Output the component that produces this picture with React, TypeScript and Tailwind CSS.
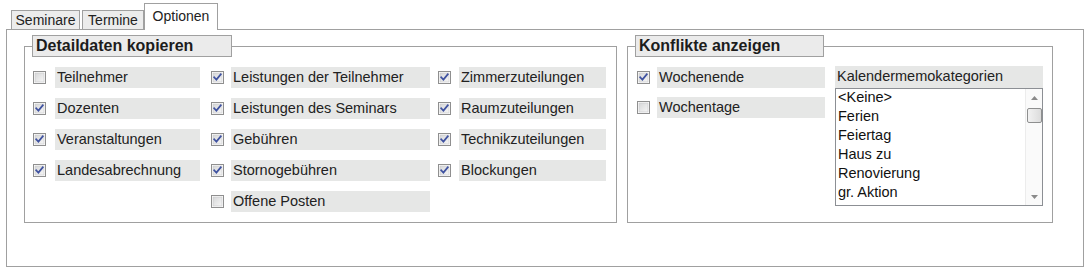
import React from "react";

const FONT = { fontFamily: '"Liberation Sans", Arial, sans-serif' };

function Check({ checked }: { checked: boolean }) {
  return (
    <svg width="13" height="13" viewBox="0 0 13 13" className="shrink-0">
      <defs>
        <linearGradient id="cbg" x1="0" y1="0" x2="1" y2="1">
          <stop offset="0" stopColor="#d6d7d8" />
          <stop offset="1" stopColor="#f6f6f6" />
        </linearGradient>
      </defs>
      <rect x="0.5" y="0.5" width="12" height="12" fill="#ffffff" stroke="#8f8f8f" />
      <rect x="2" y="2" width="9" height="9" fill="url(#cbg)" stroke="#c6c7c8" strokeWidth="0.6" />
      {checked && (
        <path d="M3.2 6.3 L5.4 8.6 L9.8 3.3" fill="none" stroke="#3f52a0" strokeWidth="1.7" strokeLinecap="square" />
      )}
    </svg>
  );
}

function Item({ label, checked, w, gap }: { label: string; checked: boolean; w: number; gap: string }) {
  return (
    <div className={`flex h-[21px] items-center ${gap}`}>
      <Check checked={checked} />
      <div
        className="flex h-[21px] items-center bg-[#e6e7e6] pl-[2px] pt-[1px] text-[14.5px] text-[#222] whitespace-nowrap"
        style={{ width: w }}
      >
        {label}
      </div>
    </div>
  );
}

function Legend({ title, w }: { title: string; w: number }) {
  return (
    <div
      className="absolute top-0 left-[8px] flex h-[22px] items-center border border-[#a0a0a0] bg-[#ebebeb] pl-[3px] text-[16px] font-bold text-[#1c1c1c]"
      style={{ width: w }}
    >
      {title}
    </div>
  );
}

export default function App() {
  const col1: [string, boolean][] = [
    ["Teilnehmer", false],
    ["Dozenten", true],
    ["Veranstaltungen", true],
    ["Landesabrechnung", true],
  ];
  const col2: [string, boolean][] = [
    ["Leistungen der Teilnehmer", true],
    ["Leistungen des Seminars", true],
    ["Gebühren", true],
    ["Stornogebühren", true],
    ["Offene Posten", false],
  ];
  const col3: [string, boolean][] = [
    ["Zimmerzuteilungen", true],
    ["Raumzuteilungen", true],
    ["Technikzuteilungen", true],
    ["Blockungen", true],
  ];
  const memo = ["<Keine>", "Ferien", "Feiertag", "Haus zu", "Renovierung", "gr. Aktion", "Urlaub"];

  return (
    <div className="h-[273px] w-[1090px] bg-white text-[#222]" style={FONT}>
      {/* tabs */}
      <div className="flex h-[29px] items-end pl-[11px] text-[14px]">
        <div className="flex h-[19px] w-[69px] items-center justify-center border border-b-0 border-[#a0a0a0] bg-[#ececec]">
          Seminare
        </div>
        <div className="ml-[2px] flex h-[19px] w-[62px] items-center justify-center border border-b-0 border-[#a0a0a0] bg-[#ececec]">
          Termine
        </div>
        <div className="relative z-10 -mb-px flex h-[27px] w-[74px] items-center justify-center border border-b-0 border-[#a0a0a0] bg-white pb-[2px]">
          Optionen
        </div>
      </div>

      {/* panel */}
      <div className="ml-[6px] flex h-[238px] w-[1078px] gap-[10px] border border-[#a0a0a0] pl-[17px] pt-[5px]">
        {/* Detaildaten kopieren */}
        <div className="relative pt-[11px]">
          <Legend title="Detaildaten kopieren" w={200} />
          <div className="flex h-[177px] w-[593px] border border-[#a0a0a0] pl-[8px] pt-[20px]">
            <div className="flex flex-col gap-[10px]">
              {col1.map(([l, c]) => (
                <Item key={l} label={l} checked={c} w={145} gap="gap-[9px]" />
              ))}
            </div>
            <div className="ml-[11px] flex flex-col gap-[10px]">
              {col2.map(([l, c]) => (
                <Item key={l} label={l} checked={c} w={199} gap="gap-[7px]" />
              ))}
            </div>
            <div className="ml-[8px] flex flex-col gap-[10px]">
              {col3.map(([l, c]) => (
                <Item key={l} label={l} checked={c} w={147} gap="gap-[8px]" />
              ))}
            </div>
          </div>
        </div>

        {/* Konflikte anzeigen */}
        <div className="relative pt-[11px]">
          <Legend title="Konflikte anzeigen" w={189} />
          <div className="flex h-[177px] w-[426px] border border-[#a0a0a0] pl-[9px]">
            <div className="flex flex-col gap-[9px] pt-[20px]">
              <Item label="Wochenende" checked={true} w={168} gap="gap-[7px]" />
              <Item label="Wochentage" checked={false} w={168} gap="gap-[7px]" />
            </div>
            <div className="ml-[10px] flex w-[208px] flex-col pt-[19px]">
              <div className="flex h-[22px] items-center bg-[#e6e7e6] pl-[2px] text-[14.5px]">
                Kalendermemokategorien
              </div>
              <div className="flex h-[118px] overflow-hidden border border-[#8c8f94] bg-white">
                <div className="flex-1 overflow-hidden pl-[2px] -mt-[1px]">
                  {memo.map((m) => (
                    <div key={m} className="h-[19px] text-[14.5px] leading-[19px] text-[#111] whitespace-nowrap">
                      {m}
                    </div>
                  ))}
                </div>
                <div className="flex w-[17px] flex-col items-center border-l border-[#ececec] bg-[#fafafa]">
                  <div className="flex h-[17px] items-center justify-center">
                    <svg width="7" height="4" viewBox="0 0 7 4">
                      <path d="M0 4 L3.5 0 L7 4 Z" fill="#8a8a8a" />
                    </svg>
                  </div>
                  <div className="mt-[2px] h-[15px] w-[15px] rounded-[2px] border border-[#8e8f8f] bg-gradient-to-r from-[#f2f2f2] to-[#dcdcdc]" />
                  <div className="flex-1" />
                  <div className="flex h-[17px] items-center justify-center">
                    <svg width="7" height="4" viewBox="0 0 7 4">
                      <path d="M0 0 L7 0 L3.5 4 Z" fill="#8a8a8a" />
                    </svg>
                  </div>
                </div>
              </div>
            </div>
          </div>
        </div>
      </div>
    </div>
  );
}
